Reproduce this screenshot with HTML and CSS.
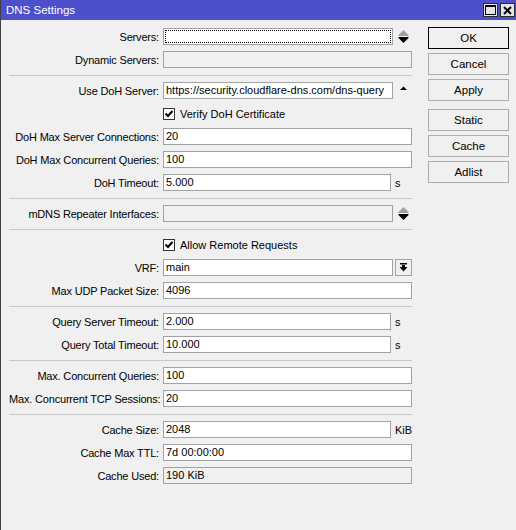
FILE: index.html
```html
<!DOCTYPE html>
<html>
<head>
<meta charset="utf-8">
<link rel="stylesheet" href="styles.css">
</head>
<body>
<div class="window">
  <div class="titlebar">
    <span class="title">DNS Settings</span>
    <span class="tbtn"><svg width="11" height="10" viewBox="0 0 11 10"><rect x="0.5" y="0.5" width="10" height="9" fill="none" stroke="#000"/><rect x="0" y="0" width="11" height="2" fill="#000"/></svg></span>
    <span class="tbtn"><svg width="9" height="9" viewBox="0 0 9 9"><path d="M1 1 L8 8 M8 1 L1 8" stroke="#000" stroke-width="2"/></svg></span>
  </div>
  <div class="content">
    <div class="form">
      <div class="row"><span class="label">Servers:</span><span class="field arrow"><span class="focus"></span></span><svg class="spin" width="11" height="13" viewBox="0 0 11 13"><path d="M5.5 0 L10.5 5 L0.5 5 Z" fill="#a0a0a0"/><rect x="0.5" y="5" width="10" height="1" fill="#a0a0a0"/><rect x="0.5" y="7" width="10" height="1" fill="#000"/><path d="M0.5 8 L10.5 8 L5.5 13 Z" fill="#000"/></svg></div>
      <div class="row"><span class="label">Dynamic Servers:</span><span class="field disabled"></span></div>
      <div class="sep"></div>
      <div class="row"><span class="label">Use DoH Server:</span><span class="field arrow">https://security.cloudflare-dns.com/dns-query</span><svg class="spin" width="11" height="13" viewBox="0 0 11 13"><path d="M5.5 2.5 L9 6 L2 6 Z" fill="#000"/></svg></div>
      <div class="row"><span class="label"></span><span class="check"><svg width="10" height="10" viewBox="0 0 10 10"><path d="M1.5 4.5 L4 7 L8.5 2" fill="none" stroke="#000" stroke-width="2"/></svg></span><span class="checktext">Verify DoH Certificate</span></div>
      <div class="row"><span class="label">DoH Max Server Connections:</span><span class="field">20</span></div>
      <div class="row"><span class="label">DoH Max Concurrent Queries:</span><span class="field">100</span></div>
      <div class="row"><span class="label">DoH Timeout:</span><span class="field unit">5.000</span><span class="unittext">s</span></div>
      <div class="sep"></div>
      <div class="row"><span class="label">mDNS Repeater Interfaces:</span><span class="field arrow disabled"></span><svg class="spin" width="11" height="13" viewBox="0 0 11 13"><path d="M5.5 0 L10.5 5 L0.5 5 Z" fill="#a0a0a0"/><rect x="0.5" y="5" width="10" height="1" fill="#a0a0a0"/><rect x="0.5" y="7" width="10" height="1" fill="#000"/><path d="M0.5 8 L10.5 8 L5.5 13 Z" fill="#000"/></svg></div>
      <div class="sep"></div>
      <div class="row"><span class="label"></span><span class="check"><svg width="10" height="10" viewBox="0 0 10 10"><path d="M1.5 4.5 L4 7 L8.5 2" fill="none" stroke="#000" stroke-width="2"/></svg></span><span class="checktext">Allow Remote Requests</span></div>
      <div class="row"><span class="label">VRF:</span><span class="field arrow">main</span><span class="dropbtn"><svg width="9" height="9" viewBox="0 0 9 9"><rect x="1" y="0" width="7" height="1.5" fill="#000"/><rect x="3" y="2" width="3" height="3" fill="#000"/><path d="M0.5 4 L8.5 4 L4.5 8.5 Z" fill="#000"/></svg></span></div>
      <div class="row"><span class="label">Max UDP Packet Size:</span><span class="field">4096</span></div>
      <div class="sep"></div>
      <div class="row"><span class="label">Query Server Timeout:</span><span class="field unit">2.000</span><span class="unittext">s</span></div>
      <div class="row"><span class="label">Query Total Timeout:</span><span class="field unit">10.000</span><span class="unittext">s</span></div>
      <div class="sep"></div>
      <div class="row"><span class="label">Max. Concurrent Queries:</span><span class="field">100</span></div>
      <div class="row"><span class="label">Max. Concurrent TCP Sessions:</span><span class="field">20</span></div>
      <div class="sep"></div>
      <div class="row"><span class="label">Cache Size:</span><span class="field unit">2048</span><span class="unittext">KiB</span></div>
      <div class="row"><span class="label">Cache Max TTL:</span><span class="field">7d 00:00:00</span></div>
      <div class="row"><span class="label">Cache Used:</span><span class="field disabled">190 KiB</span></div>
    </div>
    <div class="buttons">
      <div class="group">
        <button class="btn default">OK</button>
        <button class="btn">Cancel</button>
        <button class="btn">Apply</button>
      </div>
      <div class="group">
        <button class="btn">Static</button>
        <button class="btn">Cache</button>
        <button class="btn">Adlist</button>
      </div>
    </div>
  </div>
</div>
</body>
</html>
```
FILE: styles.css
```css
* { box-sizing: border-box; }
body {
  margin: 0;
  font-family: "Liberation Sans", Arial, sans-serif;
  font-size: 11px;
  color: #000;
}
.window {
  width: 516px;
  height: 530px;
  background: #f0f0f0;
  border-left: 1px solid #404040;
  display: flex;
  flex-direction: column;
}
.titlebar {
  height: 20px;
  background: #4e50cb;
  color: #fff;
  display: flex;
  align-items: center;
  padding-left: 5px;
  padding-right: 1px;
  font-size: 11.5px;
}
.title { flex: 1; }
.tbtn {
  width: 15px;
  height: 14px;
  margin-left: 2px;
  background: #e4e4e4;
  border: 1px solid #2a2a2a;
  display: flex;
  align-items: center;
  justify-content: center;
}
.content {
  display: flex;
  padding-top: 8px;
}
.form {
  width: 411px;
  padding-left: 8px;
  display: flex;
  flex-direction: column;
  gap: 6px;
}
.row {
  height: 17px;
  display: flex;
  align-items: center;
}
.label {
  width: 150px;
  margin-right: 4px;
  text-align: right;
  white-space: nowrap;
  letter-spacing: -0.18px;
}
.field {
  width: 249px;
  height: 17px;
  border: 1px solid #a2a2a2;
  background: #fff;
  padding: 0 2px;
  line-height: 15px;
  white-space: nowrap;
  overflow: hidden;
  position: relative;
}
.field.unit { width: 228px; }
.field.arrow { width: 230px; }
.field.disabled { background: #f0f0f0; }
.focus {
  position: absolute;
  left: 1px; top: 1px; right: 1px; bottom: 1px;
  border: 1px dotted #000;
}
.spin { margin-left: 5px; }
.unittext { margin-left: 4px; }
.dropbtn {
  width: 17px;
  height: 17px;
  margin-left: 2px;
  border: 1px solid #a2a2a2;
  background: #f0f0f0;
  display: flex;
  align-items: center;
  justify-content: center;
}
.check {
  width: 12px;
  height: 12px;
  border: 1px solid #333;
  background: #fff;
  display: flex;
  align-items: center;
  justify-content: center;
}
.checktext { margin-left: 5px; }
.sep {
  height: 2px;
  border-bottom: 1px solid #c8c8c8;
}
.buttons {
  margin-left: 16px;
  margin-top: -1px;
  width: 81px;
  display: flex;
  flex-direction: column;
  gap: 8px;
}
.group {
  display: flex;
  flex-direction: column;
  gap: 4px;
}
.btn {
  height: 22px;
  width: 81px;
  border: 1px solid #adadad;
  background: #f0f0f0;
  font-family: "Liberation Sans", Arial, sans-serif;
  font-size: 11.5px;
  color: #000;
  padding: 0;
}
.btn.default { border: 1px solid #000; }
```
